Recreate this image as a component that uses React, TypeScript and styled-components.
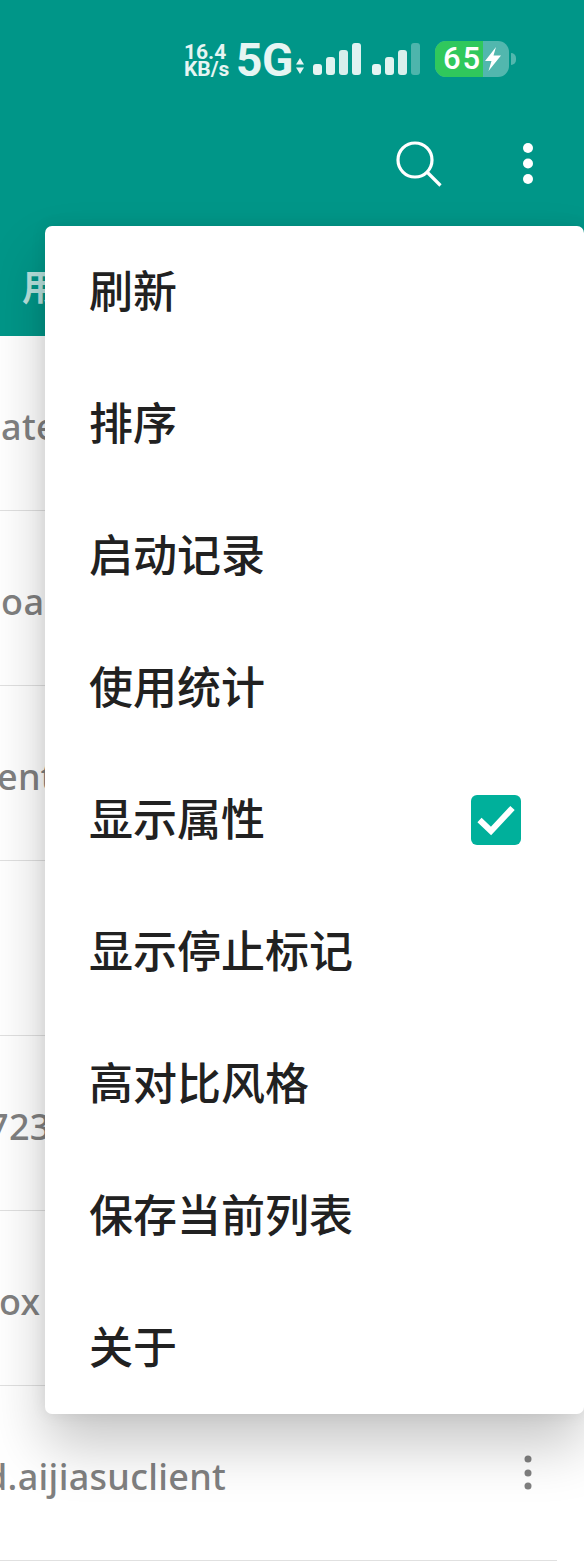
import React from "react";
import styled, { createGlobalStyle } from "styled-components";

const Global = createGlobalStyle`
  html, body { margin: 0; padding: 0; background: #fff; }
  body { font-family: "Noto Sans", "Noto Sans CJK SC", sans-serif; }
`;

const Page = styled.div`
  position: relative;
  width: 584px;
  height: 1564px;
  overflow: hidden;
  background: #fff;
`;

const Header = styled.header`
  height: 336px;
  background: #009688;
  display: flex;
  flex-direction: column;
`;

const StatusBar = styled.div`
  height: 41px;
  margin-top: 38px;
  padding-left: 184px;
  display: flex;
  align-items: center;
  color: #e6f5f3;
`;

const Speed = styled.div`
  width: 48px;
  margin-top: 4px;
  font-family: Roboto, sans-serif;
  font-weight: 700;
  font-size: 21px;
  line-height: 17px;
  display: flex;
  flex-direction: column;
`;

const SpeedLine = styled.div`
  height: 17px;
`;

const Net = styled.span`
  margin-left: 4px;
  margin-top: 4px;
  width: 55px;
  font-family: Roboto, sans-serif;
  font-weight: 700;
  font-size: 46px;
  line-height: 41px;
  letter-spacing: -0.5px;
`;

const NetArrows = styled.svg`
  margin-left: 5px;
  width: 8px;
  height: 16px;
  margin-top: 14px;
`;

const Signal = styled.svg<{ $gap: number }>`
  margin-left: ${(p) => p.$gap}px;
  width: 49px;
  height: 32px;
`;

const Battery = styled.div`
  margin-left: 14px;
  margin-top: 1px;
  width: 74px;
  height: 36px;
  border-radius: 11px;
  overflow: hidden;
  display: flex;
  background: rgba(255, 255, 255, 0.32);
`;

const BatteryFill = styled.div`
  width: 48px;
  background: #30c85c;
  color: #fff;
  font-family: Roboto, sans-serif;
  font-weight: 500;
  font-size: 31px;
  line-height: 36px;
  padding-left: 8px;
  letter-spacing: 2px;
  box-sizing: border-box;
  white-space: nowrap;
`;

const Bolt = styled.svg`
  width: 16px;
  height: 24px;
  margin-top: 6px;
  margin-left: 2px;
`;

const BatteryTip = styled.div`
  margin-left: 2px;
  margin-top: 1px;
  width: 5px;
  height: 12px;
  border-radius: 0 5px 5px 0;
  background: rgba(255, 255, 255, 0.32);
`;

const ActionBar = styled.div`
  height: 82px;
  margin-top: 44px;
  padding: 0 50px 0 0;
  display: flex;
  align-items: center;
  justify-content: flex-end;
`;

const SearchIcon = styled.svg`
  width: 48px;
  height: 48px;
  margin-right: 80px;
  margin-top: -2px;
`;

const DotsIcon = styled.svg`
  width: 12px;
  height: 44px;
  flex: none;
`;

const TabRow = styled.div`
  padding: 0 0 0 22px;
  margin-top: 58px;
  color: rgba(255, 255, 255, 0.72);
  font-family: "Noto Sans CJK SC", sans-serif;
  font-weight: 700;
  font-size: 36px;
  line-height: 44px;
`;

const AppList = styled.div`
  display: flex;
  flex-direction: column;
`;

const AppRow = styled.div`
  height: 174px;
  border-bottom: 1px solid #e0e0e0;
  margin-right: 27px;
  display: flex;
  align-items: center;
  justify-content: space-between;
  overflow: hidden;
`;

const AppName = styled.span<{ $shift: number }>`
  margin-left: ${(p) => p.$shift}px;
  margin-top: 8px;
  font-family: "Noto Sans", sans-serif;
  font-size: 36px;
  font-weight: 500;
  line-height: 50px;
  letter-spacing: 0.3px;
  color: #808080;
  white-space: nowrap;
`;

const RowMenu = styled.svg`
  width: 12px;
  height: 40px;
  margin-right: 23px;
`;

const Menu = styled.div`
  position: absolute;
  left: 45px;
  top: 226px;
  width: 539px;
  background: #fff;
  border-radius: 7px;
  box-shadow: 0 32px 56px rgba(0, 0, 0, 0.22), 0 0 16px rgba(0, 0, 0, 0.08);
  display: flex;
  flex-direction: column;
`;

const MenuItem = styled.div`
  height: 132px;
  box-sizing: border-box;
  padding: 0 63px 0 44px;
  display: flex;
  align-items: center;
  justify-content: space-between;
  font-family: "Noto Sans CJK SC", sans-serif;
  font-weight: 500;
  font-size: 44px;
  color: #212121;
`;

const MenuLabel = styled.span`
  line-height: 64px;
  margin-top: -7px;
`;

const Check = styled.svg`
  width: 50px;
  height: 50px;
`;

const menuItems = ["刷新", "排序", "启动记录", "使用统计", "显示属性", "显示停止标记", "高对比风格", "保存当前列表", "关于"];

const rows = [
  { name: "ate", shift: 1 },
  { name: ".oa", shift: -9 },
  { name: "ent", shift: -3 },
  { name: "", shift: 0 },
  { name: "723", shift: -12 },
  { name: "ox", shift: -1 },
  { name: "d.aijiasuclient", shift: -15, menu: true },
];

const SignalBars = ({ gap, last }: { gap: number; last: number }) => (
  <Signal $gap={gap} viewBox="0 0 49 32">
    <rect x="0" y="21" width="9" height="11" rx="3" fill="#e6f5f3" />
    <rect x="13" y="14" width="9" height="18" rx="3" fill="#e0f3f0" />
    <rect x="26" y="7" width="9" height="25" rx="3" fill="#d8efec" />
    <rect x="39" y="0" width="9" height="32" rx="3" fill="#fff" fillOpacity={last} />
  </Signal>
);

export default function App() {
  return (
    <Page>
      <Global />
      <Header>
        <StatusBar>
          <Speed>
            <SpeedLine>16.4</SpeedLine>
            <SpeedLine>KB/s</SpeedLine>
          </Speed>
          <Net>5G</Net>
          <NetArrows viewBox="0 0 8 16">
            <path d="M4 0 L8 6.5 H0Z M0 9.5 H8 L4 16Z" fill="#e6f5f3" />
          </NetArrows>
          <SignalBars gap={9} last={0.88} />
          <SignalBars gap={10} last={0.3} />
          <Battery>
            <BatteryFill>65</BatteryFill>
            <Bolt viewBox="0 0 16 24">
              <path d="M11 0 L0 14 H6.5 L3.5 24 L16 8.5 H8.5Z" fill="#fff" />
            </Bolt>
          </Battery>
          <BatteryTip />
        </StatusBar>
        <ActionBar>
          <SearchIcon viewBox="0 0 48 48">
            <circle cx="21" cy="21" r="17" fill="none" stroke="#fff" strokeWidth="3.2" />
            <line x1="33.5" y1="33.5" x2="46.5" y2="46.5" stroke="#fff" strokeWidth="3.2" />
          </SearchIcon>
          <DotsIcon viewBox="0 0 12 44">
            <circle cx="6" cy="6" r="5" fill="#fff" />
            <circle cx="6" cy="21.5" r="5" fill="#fff" />
            <circle cx="6" cy="37" r="5" fill="#fff" />
          </DotsIcon>
        </ActionBar>
        <TabRow>用</TabRow>
      </Header>
      <AppList>
        {rows.map((r, i) => (
          <AppRow key={i}>
            <AppName $shift={r.shift}>{r.name}</AppName>
            {r.menu && (
              <RowMenu viewBox="0 0 12 40">
                <circle cx="6" cy="6" r="3.5" fill="#808080" />
                <circle cx="6" cy="20" r="3.5" fill="#808080" />
                <circle cx="6" cy="33" r="3.5" fill="#808080" />
              </RowMenu>
            )}
          </AppRow>
        ))}
      </AppList>
      <Menu>
        {menuItems.map((m) => (
          <MenuItem key={m}>
            <MenuLabel>{m}</MenuLabel>
            {m === "显示属性" && (
              <Check viewBox="0 0 50 50">
                <rect width="50" height="50" rx="6" fill="#00b09b" />
                <path d="M8.5 25 L20 36 L41.5 13" fill="none" stroke="#fff" strokeWidth="6" />
              </Check>
            )}
          </MenuItem>
        ))}
      </Menu>
    </Page>
  );
}
